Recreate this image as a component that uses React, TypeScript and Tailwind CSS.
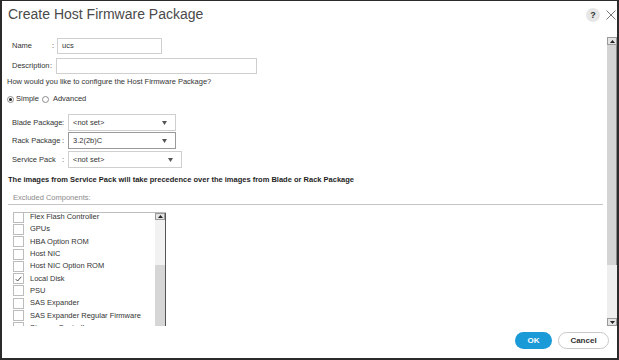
import React from 'react';

const components = [
  { name: 'Flex Flash Controller', checked: false },
  { name: 'GPUs', checked: false },
  { name: 'HBA Option ROM', checked: false },
  { name: 'Host NIC', checked: false },
  { name: 'Host NIC Option ROM', checked: false },
  { name: 'Local Disk', checked: true },
  { name: 'PSU', checked: false },
  { name: 'SAS Expander', checked: false },
  { name: 'SAS Expander Regular Firmware', checked: false },
  { name: 'Storage Controller', checked: false },
];

const Arrow = ({ down = false }: { down?: boolean }) => (
  <svg width="5" height="3" viewBox="0 0 5 3" className="shrink-0">
    <polygon points={down ? '0,0 5,0 2.5,3' : '0,3 5,3 2.5,0'} fill="#222" />
  </svg>
);

function SelectBox({ value, width, focused = false }: { value: string; width: string; focused?: boolean }) {
  return (
    <div
      className={`${width} h-full flex items-center justify-between pl-[4px] pr-[8px] bg-white border ${
        focused ? 'border-[#9a9a9a]' : 'border-[#cfcfcf]'
      }`}
    >
      <span className="text-[#333]">{value}</span>
      <svg width="5" height="4" viewBox="0 0 5 4">
        <polygon points="0,0 5,0 2.5,4" fill="#555" />
      </svg>
    </div>
  );
}

function SelectRow({ label, value, width, focused, mt }: { label: string; value: string; width: string; focused?: boolean; mt: string }) {
  return (
    <div className={`${mt} ml-[4px] h-[17px] shrink-0 flex items-center`}>
      <span className="w-[50px] whitespace-nowrap">{label}</span>
      <span className="w-[2px]">:</span>
      <div className="ml-[4px] h-full">
        <SelectBox value={value} width={width} focused={focused} />
      </div>
    </div>
  );
}

export default function App() {
  return (
    <div className="w-[619px] h-[360px] bg-white border-x-2 border-t border-b-2 border-[#2b2b2b] flex flex-col font-['Liberation_Sans',Arial,sans-serif] text-[7.5px] leading-[12px] text-[#333] overflow-hidden">
      {/* header */}
      <div className="h-[36px] shrink-0 flex items-start justify-between">
        <h1 className="pl-[6px] pt-[3px] text-[14px] leading-[20px] text-[#4a4a4a] font-normal">Create Host Firmware Package</h1>
        <div className="flex items-center gap-[6px] mt-[7px] pr-[1px]">
          <div className="w-[14px] h-[14px] rounded-full bg-[#e6e6e6] flex items-center justify-center text-[9px] leading-none font-bold text-[#333]">?</div>
          <svg width="10" height="10" viewBox="0 0 10 10">
            <path d="M0.5 0.5 L9.5 9.5 M9.5 0.5 L0.5 9.5" stroke="#666" strokeWidth="0.9" />
          </svg>
        </div>
      </div>

      {/* body */}
      <div className="h-[289px] shrink-0 flex">
        <div className="flex-1 pl-[6px] overflow-hidden flex flex-col">
          <div className="mt-[1px] ml-[4px] h-[16px] shrink-0 flex items-center">
            <span className="w-[40px]">Name</span>
            <span className="w-[2px]">:</span>
            <div className="ml-[3px] w-[105px] h-full border border-[#cfcfcf] flex items-center pl-[4px]">ucs</div>
          </div>
          <div className="mt-[4px] ml-[4px] h-[16px] shrink-0 flex items-center">
            <span className="w-[37px] whitespace-nowrap">Description</span>
            <span className="ml-[1px] w-[2px]">:</span>
            <div className="ml-[4px] w-[201px] h-full border border-[#cfcfcf]"></div>
          </div>
          <p className="mt-[2px] h-[12px] shrink-0 -ml-[1px] whitespace-nowrap">How would you like to configure the Host Firmware Package?</p>
          <div className="mt-[5px] h-[12px] shrink-0 flex items-center -ml-[1px]">
            <span className="w-[7px] h-[7px] rounded-full border border-[#8c8c8c] flex items-center justify-center">
              <span className="w-[3px] h-[3px] rounded-full bg-[#222]"></span>
            </span>
            <span className="ml-[2px]">Simple</span>
            <span className="ml-[3px] w-[7px] h-[7px] rounded-full border border-[#8c8c8c]"></span>
            <span className="ml-[4px]">Advanced</span>
          </div>
          <SelectRow mt="mt-[9px]" label="Blade Package" value="<not set>" width="w-[108px]" />
          <SelectRow mt="mt-[1px]" label="Rack Package" value="3.2(2b)C" width="w-[108px]" focused />
          <SelectRow mt="mt-[2px]" label="Service Pack" value="<not set>" width="w-[114px]" />
          <p className="mt-[6px] h-[12px] shrink-0 font-bold text-[#1e1e1e] whitespace-nowrap">
            The images from Service Pack will take precedence over the images from Blade or Rack Package
          </p>
          <div className="mt-[6px] h-[13px] shrink-0 mr-[4px] border-b border-[#c4c4c4]">
            <span className="ml-[5px] text-[#8a8a8a]">Excluded Components:</span>
          </div>
          <div className="mt-[7px] ml-[5px] w-[153px] h-[120px] shrink-0 border-t border-[#bdbdbd] flex overflow-hidden">
            <div className="flex-1 -mt-[2px]">
              {components.map((c) => (
                <div key={c.name} className="h-[12.3px] flex items-center">
                  <span className="w-[11px] h-[11px] shrink-0 border border-[#bcbcbc] bg-white flex items-center justify-center">
                    {c.checked && (
                      <svg width="7" height="6" viewBox="0 0 7 6">
                        <path d="M0.8 3.2 L2.6 5 L6.3 0.8" fill="none" stroke="#333" strokeWidth="0.9" />
                      </svg>
                    )}
                  </span>
                  <span className="ml-[6px] whitespace-nowrap">{c.name}</span>
                </div>
              ))}
            </div>
            <div className="w-[11px] shrink-0 flex flex-col border-r border-[#555]">
              <div className="h-[7px] shrink-0 bg-[#e4e4e4] border border-[#9a9a9a] flex items-center justify-center">
                <Arrow />
              </div>
              <div className="h-[45px] shrink-0 bg-[#f2f2f2]"></div>
              <div className="flex-1 bg-[#d6d6d6]"></div>
            </div>
          </div>
        </div>

        {/* outer scrollbar */}
        <div className="w-[10px] shrink-0 flex flex-col">
          <div className="h-[8px] shrink-0 bg-[#e4e4e4] border border-[#9a9a9a] flex items-center justify-center">
            <Arrow />
          </div>
          <div className="h-[220px] shrink-0 bg-[#d4d4d4] border-r border-[#8a8a8a]"></div>
          <div className="flex-1 bg-[#eeeeee]"></div>
          <div className="h-[8px] shrink-0 bg-[#e4e4e4] border border-[#9a9a9a] flex items-center justify-center">
            <Arrow down />
          </div>
        </div>
      </div>

      {/* footer */}
      <div className="flex-1 flex justify-end items-start pt-[6px] pr-[8px] gap-[6px]">
        <button className="w-[37px] h-[17px] rounded-full bg-[#1b9ad8] text-white font-bold text-[8px] leading-none">OK</button>
        <button className="w-[51px] h-[17px] rounded-full bg-white border border-[#c8c8c8] text-[#333] font-bold text-[8px] leading-none">Cancel</button>
      </div>
    </div>
  );
}
